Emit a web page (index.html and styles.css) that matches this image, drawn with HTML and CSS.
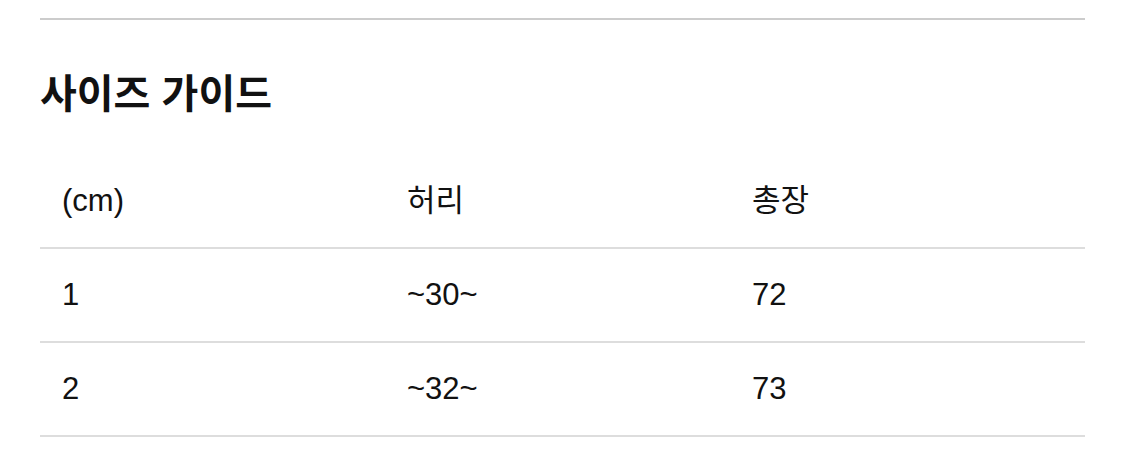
FILE: index.html
```html
<!DOCTYPE html>
<html lang="ko">
<head>
<meta charset="utf-8">
<link rel="stylesheet" href="styles.css">
</head>
<body>
<div class="page">
  <div class="rule"></div>
  <h2 class="title">사이즈 가이드</h2>
  <div class="table">
    <div class="row head">
      <div class="cell">(cm)</div>
      <div class="cell">허리</div>
      <div class="cell">총장</div>
    </div>
    <div class="row">
      <div class="cell">1</div>
      <div class="cell">~30~</div>
      <div class="cell">72</div>
    </div>
    <div class="row">
      <div class="cell">2</div>
      <div class="cell">~32~</div>
      <div class="cell">73</div>
    </div>
  </div>
</div>
</body>
</html>
```
FILE: styles.css
```css
html, body {
  margin: 0;
  padding: 0;
  background: #fff;
}
.page {
  padding: 18px 40px 0 40px;
  font-family: "Liberation Sans", "Noto Sans CJK KR", sans-serif;
  color: #111;
}
.rule {
  height: 2px;
  background: #cccccc;
}
.title {
  margin: 47px 0 0 0;
  font-family: "Noto Sans CJK KR", sans-serif;
  font-weight: 700;
  font-size: 40px;
  line-height: 48px;
  color: #111;
}
.table {
  margin-top: 40px;
}
.row {
  display: grid;
  grid-template-columns: 345px 345px 1fr;
  height: 92px;
  align-items: center;
  border-bottom: 2px solid #dddddd;
}
.cell {
  padding-left: 22px;
  font-size: 31px;
  line-height: 36px;
}
```
